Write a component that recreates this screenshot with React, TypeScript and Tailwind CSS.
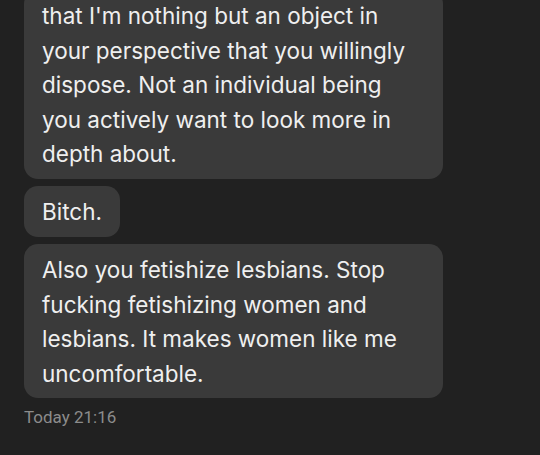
export default function App() {
  return (
    <div className="w-[540px] h-[455px] overflow-hidden bg-[#212121] pl-6 font-['Inter',sans-serif]">
      <div className="flex flex-col items-start gap-[7px] -mt-[10px]">
        <div className="w-[419px] rounded-[14px] bg-[#3a3a3a] px-[18px] pt-[9px] pb-[7px] text-[22.5px] leading-[34.5px] text-[#efefef] whitespace-nowrap">
          that I'm nothing but an object in<br />
          your perspective that you willingly<br />
          dispose. Not an individual being<br />
          you actively want to look more in<br />
          depth about.
        </div>
        <div className="rounded-[14px] bg-[#3a3a3a] px-[18px] pt-[9px] pb-2 text-[22.5px] leading-[34.5px] text-[#efefef]">
          Bitch.
        </div>
        <div className="w-[419px] rounded-[14px] bg-[#3a3a3a] px-[18px] pt-[9px] pb-[7px] text-[22.5px] leading-[34.5px] text-[#efefef] whitespace-nowrap">
          Also you fetishize lesbians. Stop<br />
          fucking fetishizing women and<br />
          lesbians. It makes women like me<br />
          uncomfortable.
        </div>
      </div>
      <div className="mt-[7px] font-['Roboto',sans-serif] text-[17px] leading-[24px] text-[#8c8c8c]">Today 21:16</div>
    </div>
  );
}
